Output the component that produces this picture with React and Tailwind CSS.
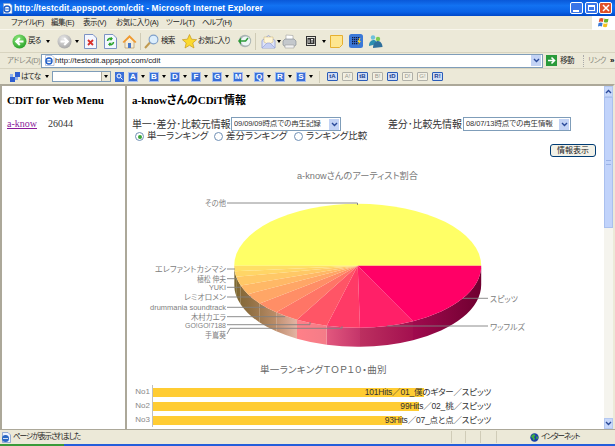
import React from "react";

const cx = 357.7, cy = 265.7, rx = 123.5, ry = 62, depth = 19;
const rimY = (x) => cy + ry * Math.sqrt(Math.max(0, 1 - ((x - cx) / rx) ** 2));
const rimXs = [481.2, 413, 360, 326.7, 297, 276.3, 259.7, 248, 240.7, 236.2, 234.7, 234.2];
const topCols = ["#ff0066", "#ff2068", "#ff3a66", "#ff5566", "#ff7566", "#ff8e66", "#ffa666", "#ffb866", "#ffc866", "#ffd566", "#ffdf66"];
const sides = [
  ["s0", "#a00a4e", "#6f0030"],
  ["s1", "#bc3060", "#a3104f"],
  ["s2", "#e2587e", "#c4356a"],
  ["s3", "#ff8088", "#f47c88"],
  ["s4", "#c09070", "#e4b4a4"],
  ["s5", "#a07a50", "#bc8e6a"],
  ["s6", "#8e6e40", "#a07a50"],
  ["s7", "#866a38", "#8e6e40"],
  ["s8", "#7d6830", "#866a38"],
  ["s9", "#7d6830", "#7d6830"],
  ["s10", "#7d6830", "#7d6830"],
];

function Pie() {
  const labels = [
    ["エレファントカシマシ", 269, 235, 71],
    ["植松 伸夫", 278.7, 237, 29],
    ["YUKI", 287.3, 241, 17],
    ["レミオロメン", 297, 251, 42],
    ["drummania soundtrack", 307.3, 265, 76],
    ["木村カエラ", 316.7, 285, 35],
  ];
  return (
    <svg width="477" height="215" viewBox="127 165 477 215" className="block">
      <defs>
        {sides.map((s, i) => (
          <linearGradient key={i} id={`g${i}`} x1="1" x2="0" y1="0" y2="0">
            <stop offset="0" stopColor={s[2]} />
            <stop offset="1" stopColor={s[1]} />
          </linearGradient>
        ))}
      </defs>
      <text x="297" y="179" fontSize="9" fill="#777" textLength="121" lengthAdjust="spacingAndGlyphs">a-knowさんのアーティスト割合</text>
      {rimXs.slice(0, -1).map((x, i) => {
        const x2 = rimXs[i + 1];
        const y1 = rimY(x), y2 = rimY(x2);
        return (
          <path
            key={i}
            fill={`url(#g${i})`}
            d={`M${x} ${y1}A${rx} ${ry} 0 0 1 ${x2} ${y2}L${x2} ${y2 + depth}A${rx} ${ry} 0 0 0 ${x} ${y1 + depth}Z`}
          />
        );
      })}
      <path d={`M${cx - rx} ${cy}A${rx} ${ry} 0 0 1 ${cx + rx} ${cy}Z`} fill="#ffff66" />
      {rimXs.slice(0, -1).map((x, i) => {
        const x2 = rimXs[i + 1];
        return <path key={i} fill={topCols[i]} d={`M${cx} ${cy}L${x} ${rimY(x)}A${rx} ${ry} 0 0 1 ${x2} ${rimY(x2)}Z`} />;
      })}
      <g stroke="#808080" strokeWidth="0.9" fill="none">
        <path d="M227 203H357.500V205" />
        {labels.map((l) => (
          <path key={l[0]} d={`M227 ${l[1]}H${l[2]}`} />
        ))}
        <path d="M227 324.700H310V322" />
        <path d="M227 334L230 328.300H342V326" />
        <path d="M463 298.300H488" />
        <path d="M387 326H488" />
      </g>
      <g fontSize="8" fill="#808080">
        <text x="205" y="206" textLength="21" lengthAdjust="spacingAndGlyphs">その他</text>
        {labels.map((l) => (
          <text key={l[0]} x={226 - l[3]} y={l[1] + 3} textLength={l[3]} lengthAdjust="spacingAndGlyphs">{l[0]}</text>
        ))}
        <text x="185" y="327.500" textLength="41" lengthAdjust="spacingAndGlyphs">GO!GO!7188</text>
        <text x="205" y="337.500" textLength="21" lengthAdjust="spacingAndGlyphs">手嶌葵</text>
        <text x="490" y="301.500" textLength="28" lengthAdjust="spacingAndGlyphs">スピッツ</text>
        <text x="490" y="329.500" textLength="35" lengthAdjust="spacingAndGlyphs">ワッフルズ</text>
      </g>
    </svg>
  );
}

function Caret({ className = "" }) {
  return <span className={`block w-0 h-0 border-x-[2.5px] border-x-transparent border-t-[3px] border-t-black ${className}`} />;
}
function Chev({ c = "#2a4a9a" }) {
  return (
    <svg width="7" height="5" viewBox="0 0 7 5"><path d="M1 1l2.500 2.500L6 1" stroke={c} strokeWidth="1.400" fill="none" /></svg>
  );
}

function Nav({ grey, back = true }) {
  const id = grey ? "ng" : "nb";
  return (
    <svg width="15" height="15" viewBox="0 0 15 15">
      <defs>
        <radialGradient id={id} cx="0.4" cy="0.3" r="0.8">
          <stop offset="0" stopColor={grey ? "#e8e8e8" : "#8fe87c"} />
          <stop offset="1" stopColor={grey ? "#a0a0a0" : "#1e9a20"} />
        </radialGradient>
      </defs>
      <circle cx="7.500" cy="7.500" r="7" fill={`url(#${id})`} />
      <path d={back ? "M11.500 7.500H5M7.800 4L4.200 7.500 7.800 11" : "M3.500 7.500H10M7.200 4l3.600 3.500L7.200 11"} stroke="#fff" strokeWidth="2" fill="none" />
    </svg>
  );
}
function DocStop() {
  return (
    <svg width="13" height="15" viewBox="0 0 13 15">
      <path d="M.5.5H9L12.500 4V14.500H.5Z" fill="#f4f7ff" stroke="#7d93c4" />
      <path d="M4 6l5 5M9 6l-5 5" stroke="#d8302a" strokeWidth="1.800" />
    </svg>
  );
}
function DocRefresh() {
  return (
    <svg width="13" height="15" viewBox="0 0 13 15">
      <path d="M.5.5H9L12.500 4V14.500H.5Z" fill="#f4f7ff" stroke="#7d93c4" />
      <path d="M3.500 7a3 3 0 0 1 5-2M9.500 8a3 3 0 0 1-5 2" stroke="#2da42d" strokeWidth="1.600" fill="none" />
      <path d="M8 2.800V6.200H5.200ZM5 12.200V8.800H7.800Z" fill="#2da42d" />
    </svg>
  );
}
function Home() {
  return (
    <svg width="15" height="15" viewBox="0 0 15 15">
      <path d="M3 7V14H12V7L7.500 3Z" fill="#f6edd8" stroke="#b08a50" strokeWidth=".6" />
      <path d="M.5 8L7.500 1 14.500 8 13 9 7.500 3.800 2 9Z" fill="#f09a30" />
      <rect x="6" y="9" width="3" height="5" fill="#4a78c8" />
    </svg>
  );
}
function Search() {
  return (
    <svg width="15" height="15" viewBox="0 0 15 15">
      <path d="M1 14L6 8.500" stroke="#c09a50" strokeWidth="2" />
      <circle cx="9.500" cy="5.500" r="4.400" fill="#dceefc" stroke="#7f9fc8" strokeWidth="1.100" />
    </svg>
  );
}
function Star() {
  return (
    <svg width="15" height="15" viewBox="0 0 15 15">
      <path d="M7.500.5l2.100 4.700 5 .5-3.800 3.300 1.200 5-4.500-2.700L3 14l1.200-5L.4 5.700l5-.5Z" fill="#fbd92e" stroke="#c79a1e" strokeWidth=".7" />
    </svg>
  );
}
function History() {
  return (
    <svg width="14" height="14" viewBox="0 0 14 14">
      <circle cx="7" cy="7" r="6.200" fill="#aab4b4" />
      <circle cx="7.600" cy="7" r="4.600" fill="#eef6f6" />
      <path d="M0 7l3-3.400V10.400Z" fill="#2e9a38" />
      <path d="M2 7H7.600L10 4" stroke="#2e9a38" strokeWidth="1.400" fill="none" />
    </svg>
  );
}
function Mail() {
  return (
    <svg width="15" height="15" viewBox="0 0 15 15">
      <path d="M1 6.500L7.500 1.500 14 6.500V14H1Z" fill="#dfe4f8" stroke="#8d9bd4" strokeWidth=".8" />
      <path d="M3 3h9v5l-4.500 2.500L3 8Z" fill="#fff6d8" stroke="#c8b070" strokeWidth=".5" />
      <path d="M1 14l5-5 3 0 5 5" fill="#c6cff2" stroke="#8d9bd4" strokeWidth=".6" />
    </svg>
  );
}
function Printer() {
  return (
    <svg width="15" height="15" viewBox="0 0 15 15">
      <path d="M4 1l7 .5V6H4Z" fill="#fff" stroke="#a0a0a0" strokeWidth=".6" />
      <path d="M1 7l2-2h9l2 2v4l-2 1.500H3L1 11Z" fill="#c4c8cc" stroke="#808890" strokeWidth=".6" />
      <path d="M3 11h9v3H3Z" fill="#f2f2f2" stroke="#909090" strokeWidth=".5" />
    </svg>
  );
}
function Edit() {
  return (
    <svg width="10" height="10" viewBox="0 0 10 10">
      <rect x=".5" y=".5" width="9" height="9" fill="#e8e8e0" stroke="#333" />
      <rect x="1.500" y="2" width="7" height="6" fill="#333" />
      <path d="M3 3.500V7M5 3.500h2M6 3.500V7" stroke="#eee" />
    </svg>
  );
}
function Note() {
  return (
    <svg width="13" height="13" viewBox="0 0 13 13">
      <path d="M.5.5h12v9l-3 3H.5Z" fill="#fee690" stroke="#e6b030" />
    </svg>
  );
}
function Keypad() {
  const dots = [];
  for (let y = 0; y < 4; y++) for (let x = 0; x < 4; x++) dots.push(<rect key={`${x}${y}`} x={3 + x * 2} y={3 + y * 2} width="1.300" height="1.300" fill="#111a40" />);
  return (
    <svg width="14" height="14" viewBox="0 0 14 14">
      <rect width="14" height="14" rx="2.500" fill="#3a78d8" />
      {dots}
      <path d="M10.500 4L8.500 8H10L8.800 11.500 12 7H10.400L11.500 4Z" fill="#ffd820" />
    </svg>
  );
}
function Messenger() {
  return (
    <svg width="15" height="15" viewBox="0 0 15 15">
      <circle cx="5" cy="3.500" r="2.200" fill="#6cc0dc" />
      <path d="M1 12c0-5 3-6 5-6 1.500 0 3 2 3 4Z" fill="#2c8fb0" />
      <circle cx="10" cy="5" r="2.200" fill="#7ecb52" />
      <path d="M5 14c0-5 3-7 5-7 2.500 0 4.500 3 4.500 6Z" fill="#2f6f9c" />
    </svg>
  );
}
function Globe({ s = 9 }) {
  return (
    <svg width={s} height={s} viewBox="0 0 9 9">
      <circle cx="4.500" cy="4.500" r="4.200" fill="#1c3fa8" />
      <path d="M2 2l2-1 1.500 1.500L4 4 5 6 3.500 7.500 2.500 5 1 4Z" fill="#3fae3f" />
      <path d="M6.500 3l1.500 1-.5 2-1.500-.5Z" fill="#3fae3f" />
    </svg>
  );
}
function PageIcon() {
  return (
    <svg width="10" height="11" viewBox="0 0 10 11">
      <path d="M1.500.5H7L9.500 3V10.500H1.500Z" fill="#eef3ff" stroke="#6e8fc8" strokeWidth=".7" />
      <circle cx="4.500" cy="6.500" r="3.500" fill="#2a68c4" />
      <path d="M2 6.500h5" stroke="#fff" strokeWidth=".8" />
    </svg>
  );
}
function IELogo() {
  return (
    <svg width="11" height="11" viewBox="0 0 11 11" className="shrink-0">
      <path d="M1.500.5H8L10 2.500V10.500H1.500Z" fill="#fff" stroke="#8aa0c8" strokeWidth=".6" />
      <circle cx="5" cy="6" r="3" fill="none" stroke="#1c5cc8" strokeWidth="1.400" />
      <path d="M2.500 6h5" stroke="#1c5cc8" />
    </svg>
  );
}
function XPFlag() {
  return (
    <svg width="13" height="11" viewBox="0 0 13 11">
      <path d="M1.500 1.500q2-1 4 0l-.7 3.500q-2-1-4 0Z" fill="#e8502a" />
      <path d="M6.500 1.500q2 1 4 0.200l-.7 3.500q-2 .8-4-.2Z" fill="#6ab52a" />
      <path d="M.600 6q2-1 4 0l-.7 3.500q-2-1-4 0Z" fill="#3a7ad8" />
      <path d="M5.600 6.200q2 1 4 .1l-.7 3.500q-2 .8-4-.2Z" fill="#f4c020" />
    </svg>
  );
}

function Letter({ c }) {
  return (
    <span className="flex items-center w-[21px] shrink-0">
      <span className="w-[10px] h-[10px] bg-[#3a6fd8] border border-[#a8c0f0] text-white text-[8px] leading-[8px] font-bold text-center">{c}</span>
      <Caret className="ml-[3px]" />
    </span>
  );
}
function Small({ t, on }) {
  return (
    <span
      className={`w-[11px] h-[9px] mr-[4px] shrink-0 rounded-[1px] border text-[6px] leading-[7px] text-center ${
        on ? "border-[#2a5cb8] bg-[#cfdcf5] text-[#1a3c90] font-bold" : "border-[#b0b0a8] bg-[#f2f0e4] text-[#9a9a90]"
      }`}
    >
      {t}
    </span>
  );
}
function Radio({ on }) {
  return (
    <span className="flex w-[9px] h-[9px] rounded-full border border-[#6f8fb5] bg-white items-center justify-center shrink-0">
      {on && <span className="w-[4px] h-[4px] rounded-full bg-[#3aa63a]" />}
    </span>
  );
}
function Select({ t, w }) {
  return (
    <div className={`flex items-center h-[14px] ${w} border border-[#7f9db9] bg-white pl-[2px] pr-[1px] text-[7.5px] tracking-[-0.1px] leading-none text-[#333] whitespace-nowrap justify-between overflow-hidden`}>
      <span className="overflow-hidden">{t}</span>
      <span className="w-[10px] h-[11px] bg-[#c3d3f5] flex items-center justify-center shrink-0"><Chev /></span>
    </div>
  );
}
function Bar({ no, w, t }) {
  return (
    <div className="flex items-center h-[14px] relative">
      <span className="w-[20px] text-right text-[8px] text-[#888] pr-[2px]">{no}</span>
      <span className="h-[14px] flex items-center border-l border-[#c0c0c0]">
        <span className={`block h-[9px] bg-[#ffcc33] ${w}`} />
      </span>
      <span className="absolute right-[113px] text-[8.5px] tracking-[-0.2px] text-[#333] whitespace-nowrap">{t}</span>
    </div>
  );
}

export default function App() {
  return (
    <div className="w-[615px] h-[446px] overflow-hidden flex flex-col bg-[#ece9d8] text-black [font-feature-settings:'palt'] font-['Liberation_Sans','Noto_Sans_CJK_JP',sans-serif]">
      <div className="h-[16px] shrink-0 flex items-center pl-[2px] pr-[3px] bg-[linear-gradient(#0a58d8,#1272f2_35%,#0a62e6_75%,#0048c8)]">
        <IELogo />
        <span className="ml-[1px] text-white font-bold text-[8.5px] tracking-[0.1px] whitespace-nowrap">http://testcdit.appspot.com/cdit - Microsoft Internet Explorer</span>
        <span className="ml-auto flex gap-[1.500px]">
          <span className="w-[13px] h-[12px] rounded-[2px] border border-white bg-[#3a76e8] flex items-end pl-[2px] pb-[1px]"><span className="w-[6px] h-[2px] bg-white" /></span>
          <span className="w-[13px] h-[12px] rounded-[2px] border border-white bg-[#3a76e8] flex items-center justify-center"><span className="w-[7px] h-[6px] border border-white border-t-2" /></span>
          <span className="w-[13px] h-[12px] rounded-[2px] border border-white bg-[#e0512a] flex items-center justify-center">
            <svg width="8" height="8" viewBox="0 0 8 8"><path d="M1 1l6 6M7 1L1 7" stroke="#fff" strokeWidth="1.500" /></svg>
          </span>
        </span>
      </div>
      <div className="h-[14px] shrink-0 flex items-center text-[7.5px] tracking-[-0.4px] text-[#222] whitespace-nowrap border-b border-[#f8f6ec] relative">
        <span className="flex pl-[11px] gap-[9px]">
          <span className="w-[31px]">ファイル(F)</span>
          <span className="w-[23px]">編集(E)</span>
          <span className="w-[24px]">表示(V)</span>
          <span className="w-[41px]">お気に入り(A)</span>
          <span className="w-[27px]">ツール(T)</span>
          <span className="w-[27px]">ヘルプ(H)</span>
        </span>
        <span className="ml-auto w-[23px] h-[14px] bg-white flex items-center pl-[6px]"><XPFlag /></span>
      </div>
      <div className="h-[23px] shrink-0 flex items-center text-[7.5px] tracking-[-0.8px] text-[#222] whitespace-nowrap border-b border-[#d8d4c0]">
        <span className="ml-[12px]"><Nav /></span>
        <span className="ml-[1px] w-[14px]">戻る</span>
        <Caret className="ml-[4px]" />
        <span className="ml-[7px]"><Nav grey back={false} /></span>
        <Caret className="ml-[3px] border-t-[#aaa]" />
        <span className="ml-[5px]"><DocStop /></span>
        <span className="ml-[7px]"><DocRefresh /></span>
        <span className="ml-[5px]"><Home /></span>
        <span className="ml-[3px] w-px h-[17px] bg-[#cfcbb6]" />
        <span className="ml-[3px]"><Search /></span>
        <span className="ml-[2px] w-[16px]">検索</span>
        <span className="ml-[5px]"><Star /></span>
        <span className="ml-[1px] w-[33px]">お気に入り</span>
        <span className="ml-[7px]"><History /></span>
        <span className="ml-[3px] w-px h-[17px] bg-[#cfcbb6]" />
        <span className="ml-[5px]"><Mail /></span>
        <Caret className="ml-[1px]" />
        <span className="ml-[1px]"><Printer /></span>
        <span className="ml-[9px]"><Edit /></span>
        <Caret className="ml-[6px]" />
        <span className="ml-[4px]"><Note /></span>
        <span className="ml-[6px]"><Keypad /></span>
        <span className="ml-[5px]"><Messenger /></span>
      </div>
      <div className="h-[16px] shrink-0 flex items-center text-[7.5px] tracking-[-0.5px] whitespace-nowrap border-b border-[#d8d4c0]">
        <span className="ml-[7px] w-[34px] text-[#8a8a80]">アドレス(D)</span>
        <div className="w-[502px] h-[14px] border border-[#7f9db9] bg-white flex items-center pl-[2px] pr-[1px]">
          <IELogo />
          <span className="text-[7.8px] tracking-normal text-[#222]">http://testcdit.appspot.com/cdit</span>
          <span className="ml-auto w-[10px] h-[11px] bg-[#c3d3f5] flex items-center justify-center"><Chev /></span>
        </div>
        <span className="ml-[3px] w-[11px] h-[11px] bg-[#2a9a3a] flex items-center justify-center">
          <svg width="9" height="9" viewBox="0 0 9 9"><path d="M1 4.500H7M4.500 1.500l3 3-3 3" stroke="#fff" strokeWidth="1.600" fill="none" /></svg>
        </span>
        <span className="ml-[3px] w-[16px] text-[#222]">移動</span>
        <span className="ml-[7px] w-px h-[12px] border-l border-dotted border-[#aaa]" />
        <span className="ml-[4px] w-[19px] text-[#8a8a80]">リンク</span>
        <span className="ml-[3px] text-[8px] font-bold leading-none">»</span>
      </div>
      <div className="h-[15px] shrink-0 flex items-center text-[7.5px] tracking-[-0.8px] whitespace-nowrap">
        <span className="ml-[10px] w-[10px] h-[10px] relative block">
          <svg width="10" height="10" viewBox="0 0 10 10" className="block"><path d="M5 0h5v5H5ZM0 5h5v5H0Z" fill="#2d5dd0" /><path d="M0 2h3v3H0ZM5 5h3v3H5Z" fill="#8fb0ee" /></svg>
        </span>
        <span className="ml-[1px] w-[18px] text-[#222]">はてな</span>
        <Caret className="ml-[6px]" />
        <div className="ml-[3px] w-[59px] h-[11px] border border-[#7f9db9] bg-white flex justify-end">
          <span className="w-[9px] bg-[#ece9d8] border-l border-[#aca899] flex items-center justify-center"><Caret /></span>
        </div>
        <span className="ml-[4px] w-[9px] h-[10px] bg-[#3a6fd8] flex items-center justify-center">
          <svg width="7" height="7" viewBox="0 0 7 7"><circle cx="3" cy="3" r="2" stroke="#fff" fill="none" /><path d="M4.500 4.500L6.500 6.500" stroke="#fff" /></svg>
        </span>
        <span className="ml-[4px] flex tracking-normal">
          <Letter c="A" /><Letter c="B" /><Letter c="D" /><Letter c="F" /><Letter c="G" /><Letter c="M" /><Letter c="Q" /><Letter c="R" /><Letter c="S" />
        </span>
        <span className="ml-[2px] w-px h-[12px] bg-[#cfcbb6]" />
        <span className="ml-[7px] flex tracking-normal">
          <Small t="tA" on /><Small t="A!" /><Small t="tB" on /><Small t="B!" /><Small t="tD" on /><Small t="D!" /><Small t="G!" /><Small t="R!" on />
        </span>
      </div>
      <div className="h-[345px] shrink-0 flex bg-white border-t-2 border-t-[#aca899] border-l-2 border-l-[#aca899] border-r-2 border-r-[#ece9d8] overflow-hidden">
        <aside className="w-[125px] shrink-0 border-r-2 border-r-[#aca899] font-['Liberation_Serif','Noto_Sans_CJK_JP',serif] pl-[5px] pt-[7px]">
          <div className="text-[11px] font-bold leading-[14px] whitespace-nowrap">CDiT for Web Menu</div>
          <div className="flex mt-[10px] text-[10px] leading-[13px]">
            <span className="w-[41px] text-[#8b1a9a] underline">a-know</span>
            <span className="text-[#333]">26044</span>
          </div>
        </aside>
        <main className="w-[477px] shrink-0 relative overflow-hidden">
          <div className="pl-[5px] pt-[7px] font-bold text-[11px] leading-[14px] font-['Liberation_Serif','Noto_Sans_CJK_JP',serif] whitespace-nowrap">a-knowさんのCDiT情報</div>
          <div className="flex items-center mt-[10px] pl-[5px] h-[14px] text-[10px] tracking-[-0.15px] text-[#333] whitespace-nowrap">
            <span className="w-[99px]">単一･差分･比較元情報</span>
            <Select t="09/09/09時点での再生記録" w="w-[110px]" />
            <span className="ml-[47px] w-[75px]">差分･比較先情報</span>
            <Select t="08/07/13時点での再生情報" w="w-[108px]" />
          </div>
          <div className="flex items-center pl-[8px] h-[11px] text-[9.5px] text-[#333] whitespace-nowrap">
            <Radio on /><span className="ml-[3px] w-[67px]">単一ランキング</span>
            <Radio /><span className="ml-[3px] w-[68px]">差分ランキング</span>
            <Radio /><span className="ml-[3px]">ランキング比較</span>
          </div>
          <div className="flex justify-end pr-[8px] mt-[2px]">
            <span className="w-[46px] h-[13px] rounded-[3px] border border-[#003c74] bg-[#f2f1e8] text-[8px] leading-[11px] text-center text-[#222]">情報表示</span>
          </div>
          <div className="mt-[8px]"><Pie /></div>
          <div className="-mt-[17px] ml-[133px] text-[9.5px] tracking-[0.3px] text-[#666] whitespace-nowrap">単一ランキングＴＯＰ１０・曲別</div>
          <div className="mt-[8px] pl-[5px]">
            <Bar no="No1" w="w-[271px]" t="101Hits／01_僕のギター／スピッツ" />
            <Bar no="No2" w="w-[266px]" t="99Hits／02_桃／スピッツ" />
            <Bar no="No3" w="w-[249px]" t="93Hits／07_点と点／スピッツ" />
          </div>
        </main>
        <div className="w-[9px] shrink-0 flex flex-col bg-[#f5f4ee]">
          <span className="h-[11px] bg-[#c8d8fa] border border-[#b4c8f0] flex items-center justify-center rotate-180"><Chev /></span>
          <span className="h-[131px] bg-[#c1d3fb] border border-[#aac0ee] flex items-center justify-center"><span className="w-[5px] h-[5px] border-y border-[#9ab2e6]" /></span>
          <span className="mt-auto h-[11px] bg-[#c8d8fa] border border-[#b4c8f0] flex items-center justify-center"><Chev /></span>
        </div>
      </div>
      <div className="h-[15px] shrink-0 flex items-center text-[7.5px] tracking-[-1.1px] text-[#222] border-t border-[#aca899] whitespace-nowrap">
        <span className="ml-[1px]"><PageIcon /></span>
        <span className="ml-[2px] w-[438px]">ページが表示されました</span>
        <span className="w-px h-[12px] bg-[#d0ccb8]" />
        <span className="ml-[13px] w-px h-[12px] bg-[#d0ccb8]" />
        <span className="ml-[14px] w-px h-[12px] bg-[#d0ccb8]" />
        <span className="ml-[15px] w-px h-[12px] bg-[#d0ccb8]" />
        <span className="ml-[33px]"><Globe /></span>
        <span className="ml-[2px]">インターネット</span>
      </div>
      <div className="flex-1 flex">
        <span className="w-[64px] bg-[#3a9a3a]" />
        <span className="flex-1 bg-[#245edb]" />
      </div>
    </div>
  );
}
